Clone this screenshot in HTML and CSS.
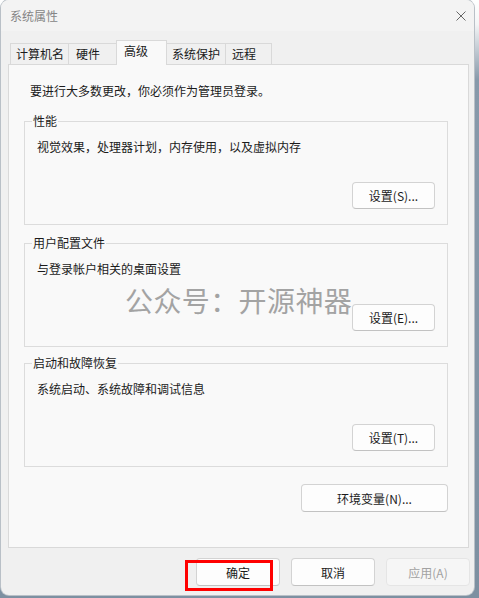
FILE: index.html
```html
<!DOCTYPE html>
<html lang="zh-CN">
<head>
<meta charset="utf-8">
<title>系统属性</title>
<link rel="stylesheet" href="styles.css">
</head>
<body>
<div class="window">
  <div class="titlebar">
    <span class="title">系统属性</span>
    <span class="close">
      <svg width="10" height="10" viewBox="0 0 10 10"><path d="M0.5 0.5 L9.5 9.5 M9.5 0.5 L0.5 9.5" stroke="#666" stroke-width="1" fill="none"/></svg>
    </span>
  </div>
  <div class="tabs">
    <div class="tab t1">计算机名</div>
    <div class="tab t2">硬件</div>
    <div class="tab t3 active">高级</div>
    <div class="tab t4">系统保护</div>
    <div class="tab t5">远程</div>
  </div>
  <div class="panel">
    <div class="watermark">公众号：开源神器</div>
    <p class="notice">要进行大多数更改，你必须作为管理员登录。</p>
    <div class="group g1">
      <span class="legend">性能</span>
      <p class="desc">视觉效果，处理器计划，内存使用，以及虚拟内存</p>
      <div class="row"><button class="btn">设置(S)...</button></div>
    </div>
    <div class="group g2">
      <span class="legend">用户配置文件</span>
      <p class="desc">与登录帐户相关的桌面设置</p>
      <div class="row"><button class="btn">设置(E)...</button></div>
    </div>
    <div class="group g3">
      <span class="legend">启动和故障恢复</span>
      <p class="desc">系统启动、系统故障和调试信息</p>
      <div class="row"><button class="btn">设置(T)...</button></div>
    </div>
    <div class="row env-row"><button class="btn env">环境变量(N)...</button></div>
  </div>
  <div class="footer">
    <button class="btn fbtn">确定</button>
    <button class="btn fbtn">取消</button>
    <button class="btn fbtn disabled">应用(A)</button>
  </div>
  <div class="highlight"></div>
</div>
</body>
</html>
```
FILE: styles.css
```css
* { box-sizing: border-box; }
html, body { margin: 0; padding: 0; }
body {
  width: 479px;
  height: 598px;
  background: linear-gradient(#ffffff 0px, #f4f5f6 24px, #8799aa 80px, #7d90a1 100%);
  font-family: "Noto Sans CJK SC", "Noto Sans", sans-serif;
  font-size: 12px;
  color: #1b1b1b;
  overflow: hidden;
}
p { margin: 0; }
.window {
  position: relative;
  margin-left: 1px;
  width: 473px;
  height: 595px;
  background: #f0f0f0;
  border-radius: 8px;
  box-shadow: 0 0 0 1px #b9c0c7;
  overflow: hidden;
}
.titlebar {
  height: 31px;
  background: #f3f3f3;
  display: flex;
  align-items: center;
  justify-content: space-between;
  padding-left: 9px;
  padding-right: 6px;
}
.title {
  color: #858585;
  font-size: 12px;
  line-height: 16px;
}
.close {
  width: 12px;
  height: 12px;
  display: flex;
  align-items: center;
  justify-content: center;
  margin-right: 1px;
}
.tabs {
  display: flex;
  align-items: flex-end;
  height: 23px;
  margin-top: 10px;
  padding-left: 9px;
  position: relative;
  z-index: 2;
}
.tab {
  height: 21px;
  border: 1px solid #d9d9d9;
  border-bottom: none;
  background: #f0f0f0;
  padding-left: 5px;
  line-height: 19px;
  white-space: nowrap;
  margin-left: -1px;
}
.t1 { width: 59px; margin-left: 0; }
.t2 { width: 49px; padding-left: 7px; }
.t3 { width: 51px; padding-left: 7px; }
.t4 { width: 60px; padding-left: 5px; }
.t5 { width: 47px; padding-left: 6px; }
.tab.active {
  height: 25px;
  margin-bottom: -1px;
  background: #f9f9f9;
  line-height: 20px;
}
.panel {
  position: relative;
  margin-left: 7px;
  width: 461px;
  height: 484px;
  background: #f9f9f9;
  border: 1px solid #d9d9d9;
  padding: 18px 20px 0 15px;
}
.notice {
  line-height: 16px;
  margin-left: 6px;
}
.group {
  position: relative;
  border: 1px solid #dcdcdc;
  padding: 17px 12px 15px 11px;
}
.g1 { margin-top: 22px; }
.g2 { margin-top: 18px; }
.g3 { margin-top: 16px; }
.legend {
  position: absolute;
  top: -9px;
  left: 7px;
  padding: 0 1px;
  background: #f9f9f9;
  line-height: 16px;
}
.desc {
  line-height: 16px;
  margin-left: 1px;
}
.row {
  display: flex;
  justify-content: flex-end;
  margin-top: 27px;
}
.btn {
  position: relative;
  font-family: inherit;
  font-size: 12px;
  color: #1b1b1b;
  background: #fdfdfd;
  border: 1px solid #d3d3d3;
  border-bottom-color: #c2c2c2;
  border-radius: 4px;
  width: 83px;
  height: 27px;
  padding: 0;
  line-height: 25px;
}
.env-row { margin-top: 17px; }
.env { width: 147px; height: 28px; }
.footer {
  display: flex;
  justify-content: flex-end;
  gap: 11px;
  padding-right: 4px;
  margin-top: 10px;
}
.fbtn { width: 84px; height: 28px; }
.fbtn.disabled {
  color: #a2a2a2;
  background: #f6f6f6;
  border-color: #e5e5e5;
}
.watermark {
  position: absolute;
  left: 116px;
  top: 221px;
  font-size: 28px;
  line-height: 28px;
  letter-spacing: 0.4px;
  color: #a3a3a3;
  white-space: nowrap;
}
.highlight {
  position: absolute;
  left: 184px;
  top: 560px;
  width: 88px;
  height: 31px;
  border: 3px solid #ff0000;
}
```
